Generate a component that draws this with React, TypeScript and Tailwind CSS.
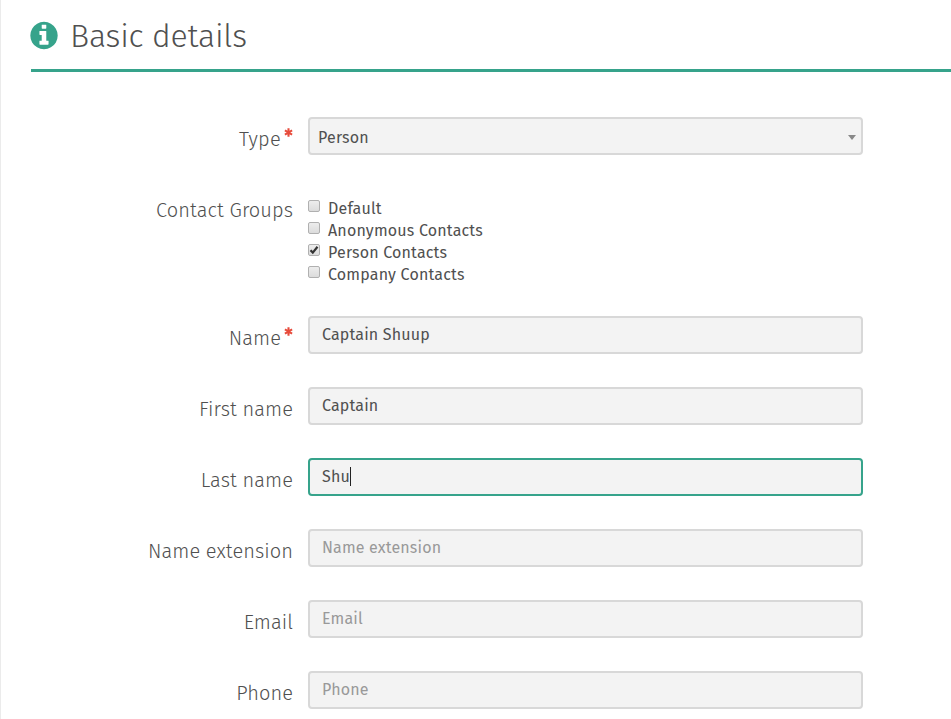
type CheckProps = { text: string; checked?: boolean };

function Asterisk() {
  return (
    <svg viewBox="0 0 10 10" className="mt-[4px] ml-[3px] size-[9px] shrink-0" stroke="#e74c3c" strokeWidth="2.3">
      <path d="M5 0.4V9.6M1 2.7L9 7.3M9 2.7L1 7.3" />
    </svg>
  );
}

function Label({ text, required, tracking = "tracking-[0.07px]" }: { text: string; required?: boolean; tracking?: string }) {
  return (
    <div className="flex h-[38px] w-[293px] shrink-0 justify-end pt-[7px] text-[20px] leading-[30px] font-light whitespace-nowrap text-[#505050]">
      <span className={tracking}>{text}</span>
      {required && <Asterisk />}
    </div>
  );
}

function Check({ text, checked }: CheckProps) {
  return (
    <label className="flex h-[22px] items-start text-[16px] leading-[22px] tracking-[0.18px] whitespace-nowrap text-[#505050]">
      <span className="mt-[2px] mr-2 flex size-3 shrink-0 items-center justify-center rounded-[2px] border border-[#b0b0b0] bg-linear-to-b from-[#ededed] to-[#dcdcdc]">
        {checked && (
          <svg viewBox="0 0 10 10" className="size-[10px]">
            <path d="M1.5 5.2 L3.8 7.6 L8.5 1.8" fill="none" stroke="#333" strokeWidth="2.2" />
          </svg>
        )}
      </span>
      <span>{text}</span>
    </label>
  );
}

type Field = {
  label: string;
  text: string;
  required?: boolean;
  focused?: boolean;
  placeholder?: boolean;
};

const fields: Field[] = [
  { label: "Name", text: "Captain Shuup", required: true },
  { label: "First name", text: "Captain" },
  { label: "Last name", text: "Shu", focused: true },
  { label: "Name extension", text: "Name extension", placeholder: true },
  { label: "Email", text: "Email", placeholder: true },
  { label: "Phone", text: "Phone", placeholder: true },
];

export default function App() {
  return (
    <main className="h-[719px] w-[951px] overflow-hidden border-l border-[#ebebeb] bg-white font-['Fira_Sans','Noto_Sans',sans-serif]">
      <header className="ml-[30px] flex h-[72px] items-start border-b-[3px] border-[#36a38b]">
        <svg viewBox="111 139 1570 1570" className="mt-[22px] -ml-px size-[28px] shrink-0 overflow-visible" fill="#36a38b">
          <path
            d="M1152 1376v-160q0-14-9-23t-23-9h-96v-512q0-14-9-23t-23-9h-320q-14 0-23 9t-9 23v160q0 14 9 23t23 9h96v320h-96q-14 0-23 9t-9 23v160q0 14 9 23t23 9h448q14 0 23-9t9-23zM1024 480v-160q0-14-9-23t-23-9h-192q-14 0-23 9t-9 23v160q0 14 9 23t23 9h192q14 0 23-9t9-23zM1664 896q0 209-103 385.5t-279.5 279.5t-385.5 103t-385.5-103t-279.5-279.5t-103-385.5t103-385.5t279.5-279.5t385.5-103t385.5 103t279.5 279.5t103 385.5z"
            fillRule="evenodd"
          />
        </svg>
        <h1 className="mt-[14px] ml-3 text-[32px] leading-[44px] font-light tracking-[-0.22px] whitespace-nowrap text-[#505050]">
          Basic details
        </h1>
      </header>
      <form className="mt-[45px] -ml-px">
        <div className="flex">
          <Label text="Type" required tracking="tracking-[0.3px]" />
          <div className="ml-[15px] flex h-[38px] w-[555px] items-center justify-between rounded-[4px] border-2 border-[#d8d8d8] bg-[#f3f3f3] pr-[5px] pl-2 text-[16px] tracking-[0.18px] text-[#505050]">
            <span className="mt-[3px]">Person</span>
            <span className="mt-[2px] h-0 w-0 border-x-4 border-t-5 border-x-transparent border-t-[#888]" />
          </div>
        </div>
        <div className="mt-[33px] flex h-[128px]">
          <Label text="Contact Groups" />
          <div className="mt-[10px] ml-[15px]">
            <Check text="Default" />
            <Check text="Anonymous Contacts" />
            <Check text="Person Contacts" checked />
            <Check text="Company Contacts" />
          </div>
        </div>
        {fields.map((f) => (
          <div key={f.label} className="mb-[33px] flex">
            <Label text={f.label} required={f.required} />
            <div
              className={`ml-[15px] flex h-[38px] w-[555px] items-center rounded-[4px] border-2 bg-[#f3f3f3] pl-3 text-[16px] leading-[22px] tracking-[0.16px] ${f.focused ? "border-[#36a38b]" : "border-[#d8d8d8]"} ${f.placeholder ? "text-[#999]" : "text-[#505050]"}`}
            >
              <span>{f.text}</span>
              {f.focused && <span className="-mt-px h-[19px] w-px bg-[#222]" />}
            </div>
          </div>
        ))}
      </form>
    </main>
  );
}
